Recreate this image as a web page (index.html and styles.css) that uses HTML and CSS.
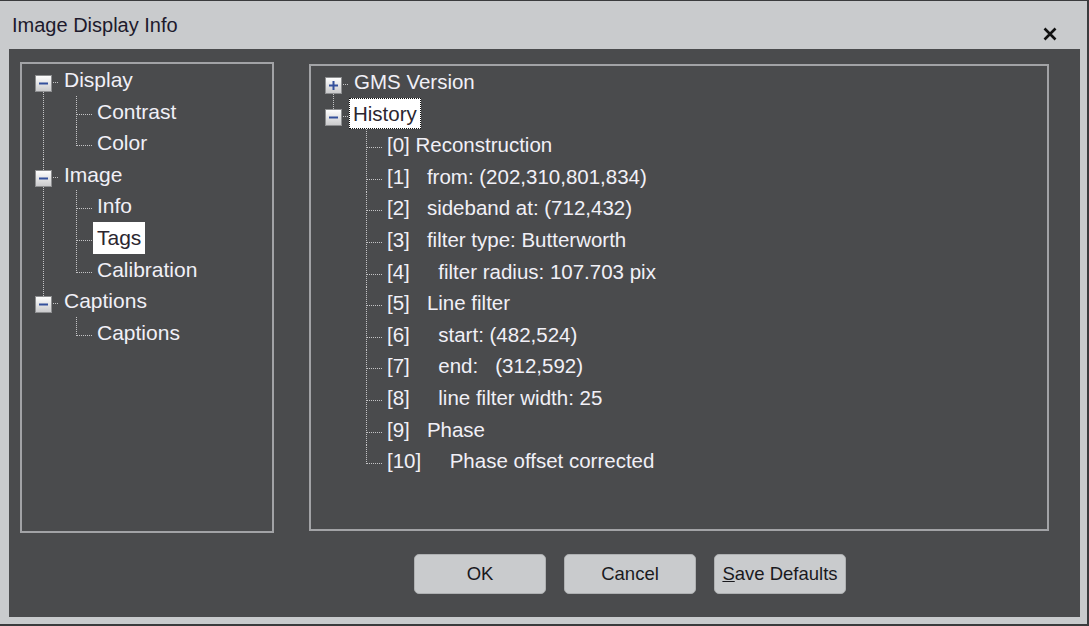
FILE: index.html
```html
<!DOCTYPE html>
<html lang="en">
<head>
  <meta charset="UTF-8">
  <title>Image Display Info</title>
  <link rel="stylesheet" href="styles.css">
</head>
<body>
  <div class="window">
    <div class="titlebar">
      <span class="title">Image Display Info</span>
      <svg class="close" width="14" height="14" viewBox="0 0 14 14">
        <path d="M1.5 1.5 L12.5 12.5 M12.5 1.5 L1.5 12.5" stroke="#111" stroke-width="2.6" fill="none"/>
      </svg>
    </div>

    <div class="panel">
      <div class="panes">
        <!-- left: sections -->
        <div class="box nav">
          <ul class="tree">
            <li class="node">
              <div class="row">
                <svg class="toggle" width="17" height="17" viewBox="0 0 17 17"><use href="#minus"/></svg>
                <span class="dash"></span><span class="label">Display</span>
              </div>
              <ul class="sub">
                <li><div class="row"><span class="dash long"></span><span class="label">Contrast</span></div></li>
                <li><div class="row"><span class="dash long"></span><span class="label">Color</span></div></li>
              </ul>
            </li>
            <li class="node">
              <div class="row">
                <svg class="toggle" width="17" height="17" viewBox="0 0 17 17"><use href="#minus"/></svg>
                <span class="dash"></span><span class="label">Image</span>
              </div>
              <ul class="sub">
                <li><div class="row"><span class="dash long"></span><span class="label">Info</span></div></li>
                <li><div class="row"><span class="dash long"></span><span class="label selected">Tags</span></div></li>
                <li><div class="row"><span class="dash long"></span><span class="label">Calibration</span></div></li>
              </ul>
            </li>
            <li class="node">
              <div class="row">
                <svg class="toggle" width="17" height="17" viewBox="0 0 17 17"><use href="#minus"/></svg>
                <span class="dash"></span><span class="label">Captions</span>
              </div>
              <ul class="sub">
                <li><div class="row"><span class="dash long"></span><span class="label">Captions</span></div></li>
              </ul>
            </li>
          </ul>
        </div>

        <!-- right: tag tree -->
        <div class="box tags">
          <ul class="tree">
            <li class="node">
              <div class="row">
                <svg class="toggle" width="17" height="17" viewBox="0 0 17 17"><use href="#plus"/></svg>
                <span class="dash"></span><span class="label">GMS Version</span>
              </div>
            </li>
            <li class="node">
              <div class="row">
                <svg class="toggle" width="17" height="17" viewBox="0 0 17 17"><use href="#minus"/></svg>
                <span class="dash"></span><span class="label selected focus">History</span>
              </div>
              <ul class="sub">
                <li><div class="row"><span class="dash long"></span><span class="label">[0] Reconstruction</span></div></li>
                <li><div class="row"><span class="dash long"></span><span class="label">[1]   from: (202,310,801,834)</span></div></li>
                <li><div class="row"><span class="dash long"></span><span class="label">[2]   sideband at: (712,432)</span></div></li>
                <li><div class="row"><span class="dash long"></span><span class="label">[3]   filter type: Butterworth</span></div></li>
                <li><div class="row"><span class="dash long"></span><span class="label">[4]     filter radius: 107.703 pix</span></div></li>
                <li><div class="row"><span class="dash long"></span><span class="label">[5]   Line filter</span></div></li>
                <li><div class="row"><span class="dash long"></span><span class="label">[6]     start: (482,524)</span></div></li>
                <li><div class="row"><span class="dash long"></span><span class="label">[7]     end:   (312,592)</span></div></li>
                <li><div class="row"><span class="dash long"></span><span class="label">[8]     line filter width: 25</span></div></li>
                <li><div class="row"><span class="dash long"></span><span class="label">[9]   Phase</span></div></li>
                <li><div class="row"><span class="dash long"></span><span class="label">[10]     Phase offset corrected</span></div></li>
              </ul>
            </li>
          </ul>
        </div>
      </div>

      <div class="buttons">
        <button class="btn">OK</button>
        <button class="btn">Cancel</button>
        <button class="btn"><u>S</u>ave Defaults</button>
      </div>
    </div>
  </div>

  <!-- expander glyphs -->
  <svg class="defs" width="0" height="0">
    <defs>
      <linearGradient id="tg" x1="0" y1="0" x2="0" y2="1">
        <stop offset="0" stop-color="#ffffff"/>
        <stop offset="1" stop-color="#c9c9cb"/>
      </linearGradient>
      <g id="minus">
        <rect x="0.5" y="0.5" width="16" height="16" fill="url(#tg)" stroke="#8d8e90"/>
        <rect x="4" y="7.5" width="9" height="2" fill="#34509c"/>
      </g>
      <g id="plus">
        <rect x="0.5" y="0.5" width="16" height="16" fill="url(#tg)" stroke="#8d8e90"/>
        <rect x="4" y="7.5" width="9" height="2" fill="#34509c"/>
        <rect x="7.5" y="4" width="2" height="9" fill="#34509c"/>
      </g>
    </defs>
  </svg>
</body>
</html>
```

FILE: styles.css
```css
body {
  margin: 0;
  background: #c9cbcd;
  font-family: "Liberation Sans", Arial, sans-serif;
}
.window {
  width: 1089px;
  height: 626px;
  box-sizing: border-box;
  border-top: 1px solid #3a3b3d;
  border-right: 2px solid #3a3b3d;
  border-bottom: 2px solid #3a3b3d;
  background: #c9cbcd;
  padding: 0 7px 7px 9px;
  display: flex;
  flex-direction: column;
}
.titlebar {
  height: 48px;
  display: flex;
  justify-content: space-between;
  align-items: flex-start;
  padding: 0 23px 0 3px;
}
.title {
  font-size: 20px;
  line-height: 48px;
  color: #1d1a2c;
}
.close {
  margin-top: 26px;
}
.defs {
  display: block;
}

.panel {
  flex: 1;
  background: #4a4b4d;
  display: flex;
  flex-direction: column;
}
.panes {
  display: flex;
  align-items: flex-start;
  gap: 35px;
  padding: 13px 0 0 11px;
}
.box {
  box-sizing: border-box;
  border: 2px solid #a2a3a6;
}
.nav {
  width: 254px;
  height: 471px;
}
.tags {
  width: 740px;
  height: 467px;
  margin-top: 2px;
}

/* tree */
.tree, .sub {
  list-style: none;
  margin: 0;
  padding: 0;
}
.tree {
  padding-left: 13px;
}
.tags .tree {
  padding-left: 14px;
}
.node {
  background: repeating-linear-gradient(to bottom, #c4c4c6 0 1px, transparent 1px 2px) no-repeat;
  background-size: 1px 100%;
  background-position: 8px 0;
}
.node:first-child {
  background-position: 8px 20px;
}
.node:last-child {
  background-size: 1px 12px;
}
.sub li {
  background: repeating-linear-gradient(to bottom, #c4c4c6 0 1px, transparent 1px 2px) no-repeat;
  background-size: 1px 100%;
  background-position: 41px 0;
}
.sub li:last-child {
  background-size: 1px 19px;
}
.row {
  display: flex;
  height: 31.6px;
}
.toggle {
  flex: none;
  margin-top: 11px;
}
.dash {
  width: 6px;
  height: 1px;
  margin: 18px 0 0 1px;
  background: repeating-linear-gradient(to right, #c4c4c6 0 1px, transparent 1px 2px);
}
.dash.long {
  width: 15px;
  margin-left: 42px;
}
.label {
  margin-left: 1px;
  padding: 0 4px;
  font-size: 21px;
  line-height: 31.6px;
  color: #f1f0f7;
  white-space: pre;
}
.tags .label {
  font-size: 20.5px;
}
.label.selected {
  background: #fff;
  color: #2b2630;
}
.label.focus {
  padding: 0 3px;
  margin-left: 0;
  border: 1px dotted #111;
  line-height: 29.6px;
}

/* buttons */
.buttons {
  display: flex;
  gap: 18px;
  margin-top: 21px;
  padding-left: 405px;
}
.btn {
  width: 132px;
  height: 40px;
  border: 1px solid #aeb0b2;
  border-radius: 5px;
  background: #c9cbcd;
  font-family: "Liberation Sans", Arial, sans-serif;
  font-size: 18.5px;
  color: #1a1a1e;
  padding: 0;
}
```
